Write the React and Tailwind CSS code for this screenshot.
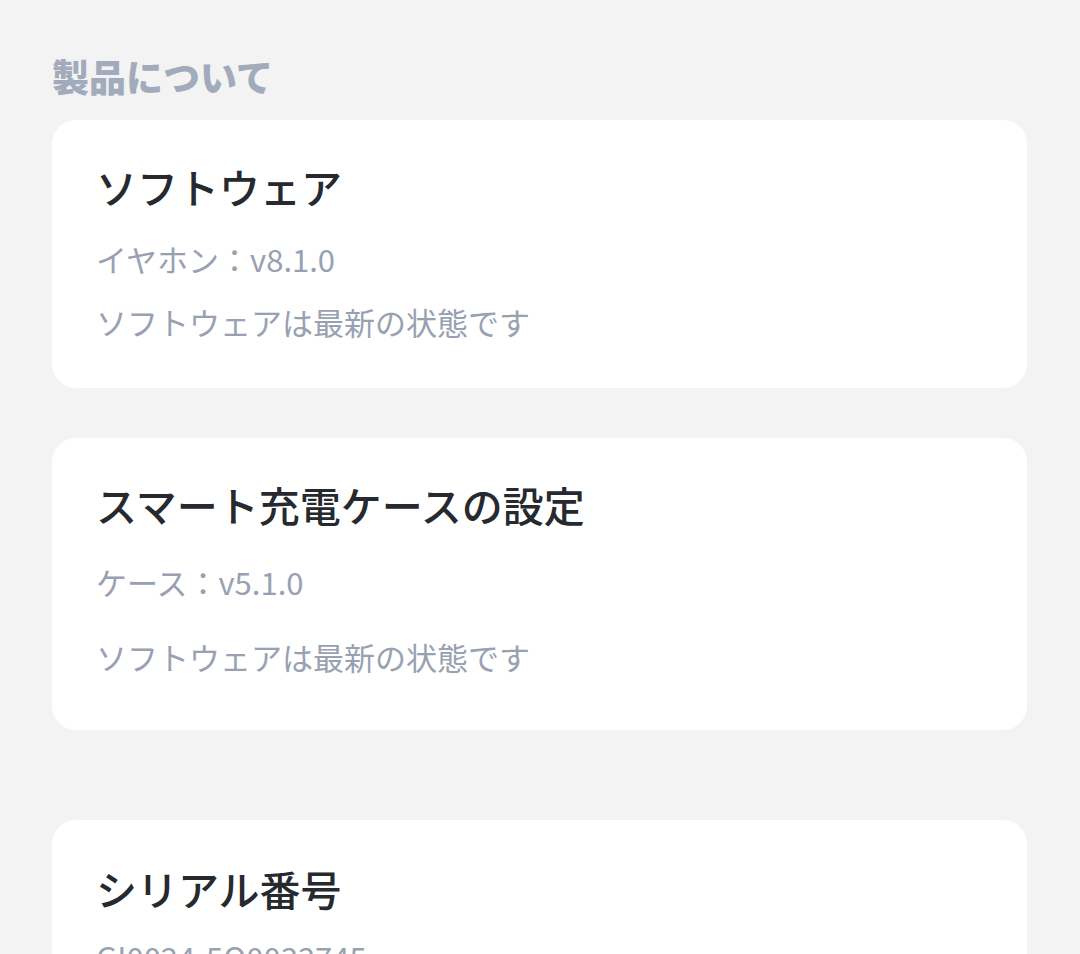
export default function App() {
  const font = { fontFamily: '"Noto Sans CJK JP", "Noto Sans", sans-serif' };
  return (
    <div className="h-[954px] w-[1080px] overflow-hidden bg-[#f3f3f4] px-[52px] pt-[51px]" style={font}>
      <h2 className="text-[37px] leading-[50px] font-black text-[#a2abbb]">製品について</h2>
      <div className="mt-[19px] w-[975px] rounded-[24px] bg-white pl-[44px] pt-[36px] pb-[43px]">
        <div className="text-[41px] leading-[60px] font-medium text-[#26292e]">ソフトウェア</div>
        <div className="mt-[20px] text-[31px] leading-[46px] text-[#98a1b2]">イヤホン：v8.1.0</div>
        <div className="mt-[17px] text-[31px] leading-[46px] text-[#98a1b2]">ソフトウェアは最新の状態です</div>
      </div>
      <div className="mt-[50px] w-[975px] rounded-[24px] bg-white pl-[44px] pt-[36px] pb-[50px]">
        <div className="text-[41px] leading-[60px] font-medium text-[#26292e]">スマート充電ケースの設定</div>
        <div className="mt-[25px] text-[31px] leading-[46px] text-[#98a1b2]">ケース：v5.1.0</div>
        <div className="mt-[29px] text-[31px] leading-[46px] text-[#98a1b2]">ソフトウェアは最新の状態です</div>
      </div>
      <div className="mt-[90px] w-[975px] rounded-[24px] bg-white pl-[44px] pt-[38px] pb-[36px]">
        <div className="text-[41px] leading-[60px] font-medium text-[#26292e]">シリアル番号</div>
        <div className="mt-[16px] text-[31px] leading-[46px] text-[#98a1b2]">GI0024-5Q0033745</div>
      </div>
    </div>
  );
}
